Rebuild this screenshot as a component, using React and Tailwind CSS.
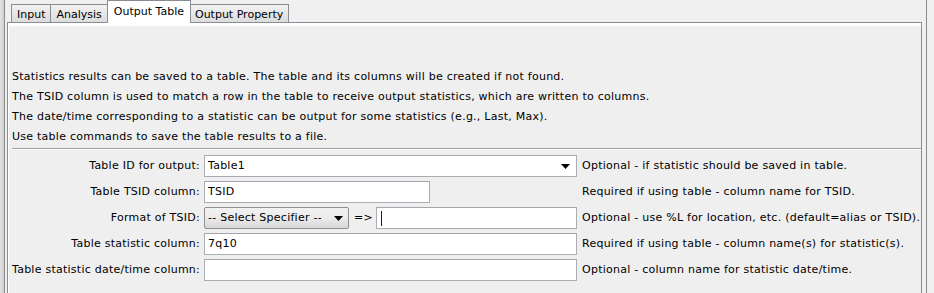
import React from "react"

const font = { fontFamily: '"DejaVu Sans", Verdana, sans-serif' }

function Tab({ label, selected }) {
  if (selected) {
    return (
      <div className="relative z-10 -mx-[1px] h-[23px] px-[6px] pt-[3px] border border-b-0 border-[#898c95] bg-white text-black tracking-normal">
        {label}
      </div>
    )
  }
  return (
    <div className="mt-[4px] h-[18px] px-[5px] pt-[2px] border border-b-0 border-[#898c95] bg-gradient-to-b from-[#f2f2f2] to-[#dcdcdc] text-black tracking-normal -ml-[1px] first:ml-0">
      {label}
    </div>
  )
}

function Arrow() {
  return (
    <svg width="9" height="5" viewBox="0 0 9 5" className="shrink-0">
      <path d="M0 0 H9 L4.5 5 Z" fill="#000" />
    </svg>
  )
}

function TextBox({ value, width, caret }) {
  return (
    <div
      className={`h-[22px] border border-[#abadb3] border-t-[#a3a6ad] bg-white pl-[3px] flex items-center ${width}`}
    >
      {caret && <div className="w-[1px] h-[15px] bg-[#0000ff] ml-[1px]" />}
      {value}
    </div>
  )
}

function Row({ label, children, desc }) {
  return (
    <div className="flex items-center h-[22px]">
      <div className="w-[192px] pr-[4px] text-right whitespace-nowrap">{label}</div>
      <div className="w-[373px] flex items-center">{children}</div>
      <div className="pl-[5px] whitespace-nowrap">{desc}</div>
    </div>
  )
}

export default function App() {
  return (
    <div
      className="w-[934px] h-[293px] overflow-hidden bg-[#f0f0f0] text-[11px] tracking-[0.25px] text-black flex"
      style={font}
    >
      <div className="w-[4px] bg-gradient-to-r from-[#e4e4e4] to-[#cfcfcf]" />
      <div className="w-[923px] border-l border-r border-[#8a8a8a] pl-[2px] pr-[4px] flex flex-col">
        <div className="flex pl-[4px] h-[22px] items-start">
          <Tab label="Input" />
          <Tab label="Analysis" />
          <Tab label="Output Table" selected />
          <Tab label="Output Property" />
        </div>
        <div className="flex-1 border border-b-0 border-[#898c95] bg-[#efefef]">
          <div className="border-t-[3px] border-l border-white h-full pl-[3px] pt-[41px]">
            <div className="leading-[20px]">
              <div>Statistics results can be saved to a table. The table and its columns will be created if not found.</div>
              <div>The TSID column is used to match a row in the table to receive output statistics, which are written to columns.</div>
              <div>The date/time corresponding to a statistic can be output for some statistics (e.g., Last, Max).</div>
              <div>Use table commands to save the table results to a file.</div>
            </div>
            <div className="h-[1px] bg-[#a0a0a0] mt-[1px] border-b border-white box-content" />
            <div className="flex flex-col gap-[4px] mt-[5px]">
              <Row label="Table ID for output:" desc="Optional - if statistic should be saved in table.">
                <div className="w-[373px] h-[22px] border border-[#abadb3] bg-white pl-[3px] pr-[6px] flex items-center justify-between">
                  <span>Table1</span>
                  <Arrow />
                </div>
              </Row>
              <Row label="Table TSID column:" desc="Required if using table - column name for TSID.">
                <TextBox value="TSID" width="w-[226px]" />
              </Row>
              <Row label="Format of TSID:" desc="Optional - use %L for location, etc. (default=alias or TSID).">
                <div className="w-[145px] h-[22px] border border-[#8f8f8f] rounded-[2px] bg-gradient-to-b from-[#f2f2f2] via-[#ebebeb] to-[#d7d7d7] pl-[3px] pr-[5px] flex items-center justify-between">
                  <span>-- Select Specifier --</span>
                  <Arrow />
                </div>
                <span className="pl-[5px] pr-[3px]">=&gt;</span>
                <TextBox caret width="flex-1" />
              </Row>
              <Row label="Table statistic column:" desc="Required if using table - column name(s) for statistic(s).">
                <TextBox value="7q10" width="w-[373px]" />
              </Row>
              <Row label="Table statistic date/time column:" desc="Optional - column name for statistic date/time.">
                <TextBox width="w-[373px]" />
              </Row>
            </div>
          </div>
        </div>
      </div>
      <div className="flex-1 bg-[#f0f0f0]" />
    </div>
  )
}
